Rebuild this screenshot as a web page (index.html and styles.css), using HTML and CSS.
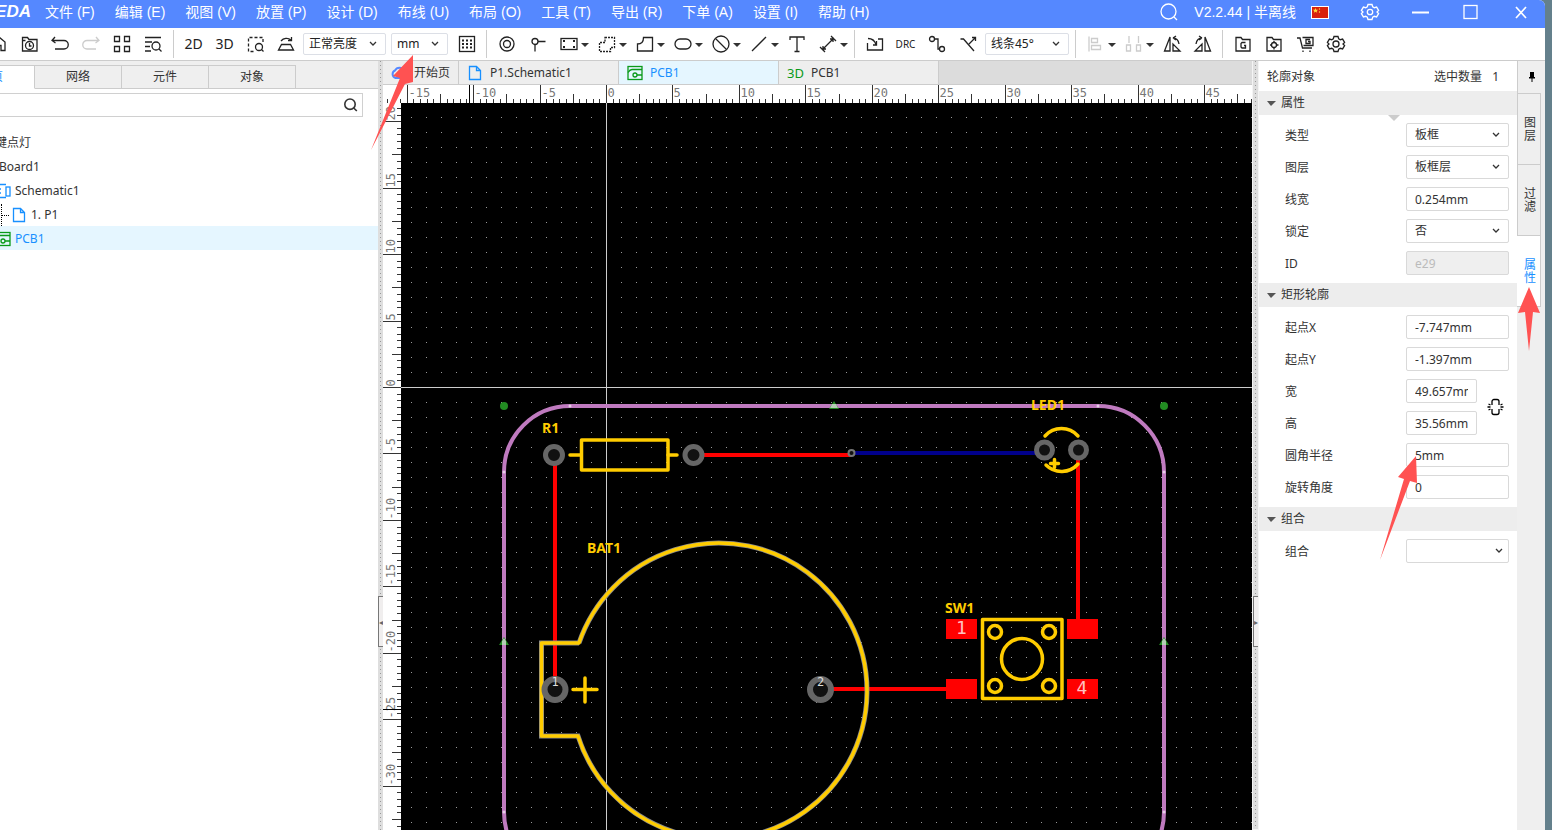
FILE: index.html
```
<!DOCTYPE html>
<html lang="zh-CN">
    <head>
        <meta charset="utf-8">
        <title>PCB1</title>
        <link rel="stylesheet" href="styles.css">
    </head>
    <body>
<div class="window">
    <header class="titlebar">
        <span class="logo">EDA</span>
        <nav class="menu">
            <button>文件 (F)</button>
            <button>编辑 (E)</button>
            <button>视图 (V)</button>
            <button>放置 (P)</button>
            <button>设计 (D)</button>
            <button>布线 (U)</button>
            <button>布局 (O)</button>
            <button>工具 (T)</button>
            <button>导出 (R)</button>
            <button>下单 (A)</button>
            <button>设置 (I)</button>
            <button>帮助 (H)</button>
        </nav>
        <div class="status">
            <button class="find" aria-label="搜索"><svg class="icon" viewBox="0 0 20 20"><circle cx="9.5" cy="9.5" r="7.5"/><path d="M15 15l3 3"/></svg></button>
            <span>V2.2.44 | 半离线</span>
            <svg class="flag" viewBox="0 0 18 13"><rect width="18" height="13" fill="#fff"/><rect x="1" y="1" width="16" height="11" fill="#d8200c"/><path d="M4.500 2l.8 1.700 1.800.1-1.400 1.200.5 1.800-1.700-1-1.700 1 .5-1.800-1.400-1.200 1.800-.1z" fill="#ffd83a"/><circle cx="8.500" cy="3" r=".7" fill="#ffd83a"/><circle cx="8.500" cy="6" r=".7" fill="#ffd83a"/></svg>
        </div>
        <div class="winbuttons">
            <button aria-label="设置"><svg class="icon" viewBox="0 0 20 20"><path d="M8 2.500h4l.7 2.300 1.600.9 2.300-.6 2 3.400-1.600 1.500 1.600 1.600-2 3.300-2.300-.6-1.600.9-.7 2.300H8l-.7-2.300-1.600-.9-2.300.6-2-3.300L3 10 1.400 8.500l2-3.400 2.300.6 1.600-.9z"/><circle cx="10" cy="10" r="2.700"/></svg></button>
            <button aria-label="最小化"><svg class="icon" viewBox="0 0 20 20"><path d="M2 10.500h17" stroke-width="2"/></svg></button>
            <button aria-label="最大化"><svg class="icon" viewBox="0 0 20 20"><rect x="4" y="3.500" width="13" height="13"/></svg></button>
            <button aria-label="关闭"><svg class="icon" viewBox="0 0 20 20"><path d="M6 5l10 11M16 5L6 16" stroke-width="1.700"/></svg></button>
        </div>
    </header>

    <div class="toolbar">
        <button class="tool first" aria-label="主页"><svg class="icon" viewBox="0 0 20 20"><path d="M1 10l9-7 6 5v8.500H12v-5H8v5H4V9"/></svg></button>
        <button class="tool" aria-label="最近"><svg class="icon" viewBox="0 0 20 20"><path d="M2.500 17V3.500h5l1.500 2H17V17zM2.500 6.500h3"/><circle cx="9.500" cy="11.500" r="4"/><path d="M9.500 9v3h2"/></svg></button>
        <button class="tool" aria-label="撤销"><svg class="icon" viewBox="0 0 20 20"><path d="M4 3L1 6.500l3.500 2.500M1.500 6.500H13a4 4 0 0 1 0 8.500H4"/></svg></button>
        <button class="tool off" aria-label="重做"><svg class="icon" viewBox="0 0 20 20"><path d="M14 3l3 3.500L13.500 9M16.500 6.500H5A4 4 0 0 0 5 15h9"/></svg></button>
        <button class="tool" aria-label="网格"><svg class="icon" viewBox="0 0 20 20"><path d="M1.500 2.500h5v5h-5zM11.500 2.500h5v5h-5zM1.500 12.500h5v5h-5zM11.500 12.500h5v5h-5z"/></svg></button>
        <button class="tool" aria-label="查找"><svg class="icon" viewBox="0 0 20 20"><path d="M1 3.500h16M1 8h7M1 12.500h5M1 17h6"/><circle cx="12" cy="12" r="4"/><path d="M15 15l2.500 2.500"/></svg></button>
        <i class="sep"></i>
        <button class="tool">2D</button>
        <button class="tool">3D</button>
        <button class="tool" aria-label="框选缩放"><svg class="icon" viewBox="0 0 20 20"><path d="M17 8V3.500H2.500v14H8" stroke-dasharray="3 2"/><circle cx="13" cy="13" r="3.500"/><path d="M15.500 15.500l2 2"/></svg></button>
        <button class="tool" aria-label="翻转板子"><svg class="icon" viewBox="0 0 20 20"><path d="M4.500 10.500h9l3 5.500h-15zM4 7c2.500-3 7-3.500 10-1M14.500 3v3.500H11"/></svg></button>
        <select class="brightness" aria-label="亮度"><option>正常亮度</option></select>
        <select class="unit" aria-label="单位"><option>mm</option></select>
        <button class="tool" aria-label="栅格"><svg class="icon" viewBox="0 0 20 20"><rect x="2.500" y="2.500" width="15" height="15"/><path d="M5 6.500h11M5 10h11M5 13.500h11" stroke-width="2" stroke-dasharray="2 2"/></svg></button>
        <i class="sep"></i>
        <button class="tool" aria-label="焊盘"><svg class="icon" viewBox="0 0 20 20"><circle cx="10" cy="10" r="7"/><circle cx="10" cy="10" r="3.500"/></svg></button>
        <button class="tool" aria-label="过孔"><svg class="icon" viewBox="0 0 20 20"><circle cx="7" cy="7.500" r="3"/><path d="M10 7.500h7.500M7 10.500v7"/></svg></button>
        <button class="tool drop" aria-label="板框"><svg class="icon" viewBox="0 0 20 20"><rect x="2" y="4.500" width="16" height="11"/><path d="M4 7h2M14 7h2M4 13h2M14 13h2" stroke-width="2"/></svg></button>
        <button class="tool drop" aria-label="禁止区域"><svg class="icon" viewBox="0 0 20 20"><path d="M8 3.500h9.500v10h-4v4h-11v-9H8z" stroke-dasharray="2 1"/></svg></button>
        <button class="tool drop" aria-label="铺铜"><svg class="icon" viewBox="0 0 20 20"><path d="M8.500 3.500h9v13.500h-15V10q6 0 6-6.500z"/></svg></button>
        <button class="tool drop" aria-label="槽"><svg class="icon" viewBox="0 0 20 20"><rect x="2" y="5" width="16" height="10" rx="5"/></svg></button>
        <button class="tool drop" aria-label="禁布"><svg class="icon" viewBox="0 0 20 20"><circle cx="10" cy="10" r="8"/><path d="M4.500 4.500l11 11"/></svg></button>
        <button class="tool drop" aria-label="线条"><svg class="icon" viewBox="0 0 20 20"><path d="M3 17L17 3"/></svg></button>
        <button class="tool" aria-label="文本"><svg class="icon" viewBox="0 0 20 20"><path d="M3 6V3h14v3M10 3v14.500M7.500 17.500h5"/></svg></button>
        <button class="tool drop" aria-label="尺寸"><svg class="icon" viewBox="0 0 20 20"><path d="M4 16L16 4M2 13l5 5M13 2l5 5M5 12v3h3M12 5h3v3"/></svg></button>
        <i class="sep"></i>
        <button class="tool" aria-label="导入变更"><svg class="icon" viewBox="0 0 20 20"><path d="M2.500 9v7h15V5H13M3 4.500q6 0 8 6M11.500 7v4H8"/></svg></button>
        <button class="tool drc">DRC</button>
        <button class="tool" aria-label="单路布线"><svg class="icon" viewBox="0 0 20 20"><circle cx="5" cy="5" r="2.500"/><circle cx="15" cy="15" r="2.500"/><path d="M7.500 5H11v10h1.500"/></svg></button>
        <button class="tool" aria-label="优化布线"><svg class="icon" viewBox="0 0 20 20"><path d="M2.500 5h3L16 17M11 10l6-6M14 3.500h3.500V7"/></svg></button>
        <select class="corner" aria-label="布线拐角"><option>线条45°</option></select>
        <i class="sep"></i>
        <button class="tool drop off" aria-label="对齐"><svg class="icon" viewBox="0 0 20 20"><path d="M3 2.500v15M5.500 4.500h6v4h-6zM5.500 11.500h9v4h-9z"/></svg></button>
        <button class="tool drop off" aria-label="分布"><svg class="icon" viewBox="0 0 20 20"><path d="M5 2v7M14.500 2v7M2.500 11h4v6h-4zM12.500 11h4v6h-4z"/></svg></button>
        <button class="tool" aria-label="左转"><svg class="icon" viewBox="0 0 20 20"><path d="M8 3v14H2.500zM11 17h7l-7-7zM11 4q5 0 6 6M11 4l3-2M11 4l3 2"/></svg></button>
        <button class="tool" aria-label="右转"><svg class="icon" viewBox="0 0 20 20"><path d="M12 3v14h5.500zM9 17H2l7-7zM9 4q-5 0-6 6M9 4L6 2M9 4L6 6"/></svg></button>
        <i class="sep"></i>
        <button class="tool" aria-label="导出Gerber"><svg class="icon" viewBox="0 0 20 20"><path d="M3 17V3.500h5l1.500 2H17V17zM12.500 8.500H9L8 9.500V13l1 1h3.500v-2.500H11"/></svg></button>
        <button class="tool" aria-label="导出坐标"><svg class="icon" viewBox="0 0 20 20"><path d="M3 17V3.500h5l1.500 2H17V17z"/><circle cx="10" cy="11" r="2.500"/><path d="M10 7v2M10 13v2.500M6 11h2M12 11h2.500"/></svg></button>
        <button class="tool" aria-label="下单"><svg class="icon" viewBox="0 0 20 20"><path d="M2 4h3l2.500 10H17M7.500 3.500H18v8H8.500M15 5.500h-4v4h4v-2h-2M8 16.500v1.500M15 16.500v1.500"/></svg></button>
        <button class="tool" aria-label="设置"><svg class="icon" viewBox="0 0 20 20"><path d="M8 2.500h4l.7 2.300 1.600.9 2.300-.6 2 3.400-1.600 1.500 1.600 1.600-2 3.300-2.300-.6-1.600.9-.7 2.300H8l-.7-2.300-1.600-.9-2.300.6-2-3.300L3 10 1.400 8.500l2-3.400 2.300.6 1.600-.9z"/><circle cx="10" cy="10" r="3"/></svg></button>
    </div>

    <div class="main">
        <aside class="project">
            <div class="ptabs">
                <button class="active">图页</button>
                <button>网络</button>
                <button>元件</button>
                <button>对象</button>
            </div>
            <div class="search">
                <input type="text" aria-label="过滤">
                <svg class="icon" viewBox="0 0 20 20"><circle cx="10" cy="9" r="6.500"/><path d="M15 14l3.500 3.500"/></svg>
            </div>
            <ul class="tree">
                <li class="l1">一键点灯</li>
                <li class="l2">Board1</li>
                <li class="l3"><svg class="icon blue" viewBox="0 0 16 16"><path d="M11 1.500H2v13h9M2 6h4M2 10h4"/><rect x="11" y="4" width="4" height="9"/></svg>Schematic1</li>
                <li class="l4"><i class="branch"></i><svg class="icon blue" viewBox="0 0 16 16"><path d="M2.500 1.500h7l4 4v9h-11zM9.500 1.500v4h4"/></svg>1. P1</li>
                <li class="l3 active"><svg class="icon green" viewBox="0 0 16 16"><rect x="1" y="1.500" width="14" height="13"/><path d="M1 6.500q2-2 4-2h10M10 10h5"/><circle cx="8" cy="10" r="2"/></svg>PCB1</li>
            </ul>
        </aside>
        <div class="splitter"><button class="handle" aria-label="收起左侧">◂</button></div>

        <section class="editor">
            <div class="tabs">
                <button class="start"><svg class="icon cloud" viewBox="0 0 16 16"><path d="M6 13H4.500a4 4 0 0 1-.5-7.500 5 5 0 0 1 9 0A4 4 0 0 1 12 13z"/></svg>开始页</button>
                <button><svg class="icon blue" viewBox="0 0 16 16"><path d="M2.500 1.500h7l4 4v9h-11zM9.500 1.500v4h4"/></svg>P1.Schematic1</button>
                <button class="active"><svg class="icon green" viewBox="0 0 16 16"><rect x="1" y="1.500" width="14" height="13"/><path d="M1 7.500q2-3 4-3h10M10 10h5"/><circle cx="8" cy="10" r="2"/></svg>PCB1</button>
                <button><span class="threed">3D</span>PCB1</button>
            </div>
            <svg class="ruler hruler" id="hruler"></svg>
            <div class="view">
                <svg class="ruler vruler" id="vruler"></svg>
                <svg class="board">
                    <defs>
                        <pattern id="dots" x="10" y="14" width="15" height="15" patternUnits="userSpaceOnUse">
                            <rect width="1" height="1" fill="#999"/>
                        </pattern>
                    </defs>
                    <rect width="100%" height="100%" fill="#000"/>
                    <rect width="100%" height="100%" fill="url(#dots)"/>
                    <path class="axis" d="M0 284.500H3000M205.500 0V3000"/>
                    <g transform="translate(-401 -103)">
                        <!-- outline -->
                        <rect class="outline" x="504" y="406" width="660" height="472" rx="66"/>
                        <g fill="#e6cfe6">
                            <circle cx="570" cy="406" r="1.500"/><circle cx="1098" cy="406" r="1.500"/>
                            <circle cx="504" cy="472" r="1.500"/><circle cx="1164" cy="472" r="1.500"/>
                            <circle cx="504" cy="812" r="1.500"/><circle cx="1164" cy="812" r="1.500"/>
                        </g>
                        <g fill="#228b22">
                            <circle cx="504" cy="406" r="4"/>
                            <circle cx="1164" cy="406" r="4"/>
                            <path d="M834 401l5 8h-10zM504 637l5 8h-10zM1164 637l5 8h-10z"/>
                        </g>
                        <path d="M832 404h4l2 4h-8zM502 641l2-3 2 3v4h-4zM1162 641l2-3 2 3v4h-4z" fill="#b4ccb4"/>
                        <!-- tracks -->
                        <path class="track" d="M555 455V689M693 455H851M1078 450V625M820 689H960"/>
                        <path class="track bottom" d="M852 453H1044"/>
                        <!-- silk -->
                        <path class="edge" d="M579 643H541.500V736H578A148 148 0 1 0 579 643"/>
                        <g class="silk">
                            <path d="M579 643H541.500V736H578A148 148 0 1 0 579 643M573 689.500h24M585 678v24"/>
                            <rect x="581.500" y="440" width="86.500" height="30"/>
                            <path d="M570 455h11M668 455h9"/>
                            <path d="M1045 436a22 22 0 0 1 33 0M1046 465a22 22 0 0 0 32-1M1050.500 463.500h8M1054.500 459.500v8"/>
                            <rect x="982.500" y="619.500" width="79.500" height="79"/>
                            <circle cx="1022" cy="659" r="20.500"/>
                            <circle cx="995" cy="632" r="6.500"/><circle cx="1049" cy="632" r="6.500"/>
                            <circle cx="995" cy="686" r="6.500"/><circle cx="1049" cy="686" r="6.500"/>
                        </g>
                        <g class="pad">
                            <circle cx="554" cy="455" r="8.500"/><circle cx="693.500" cy="455" r="8.500"/>
                            <circle cx="1044.500" cy="450" r="8"/><circle cx="1078.500" cy="450" r="8"/>
                        </g>
                        <g class="pad big">
                            <circle cx="555" cy="689.500" r="10.500"/><circle cx="820.500" cy="689.500" r="10.500"/>
                        </g>
                        <circle class="via" cx="851.500" cy="453" r="3"/>
                        <path d="M946 619h31v20h-31zM1067 619h31v20h-31zM946 679h31v20h-31zM1067 679h31v20h-31z" fill="#f00"/>
                        <g class="name">
                            <text x="542" y="433">R1</text>
                            <text x="587" y="553">BAT1</text>
                            <text x="1031" y="410">LED1</text>
                            <text x="945" y="613">SW1</text>
                        </g>
                        <g class="num">
                            <text x="555" y="686">1</text>
                            <text x="820.500" y="686">2</text>
                            <text class="smd" x="961.500" y="634">1</text>
                            <text class="smd" x="1082" y="694">4</text>
                        </g>
                    </g>
                </svg>
            </div>
        </section>
        <div class="splitter right"><button class="handle" aria-label="收起右侧">▸</button></div>

        <aside class="props">
            <div class="phead"><span>轮廓对象</span><span class="count">选中数量<b>1</b></span></div>
            <h3 class="marked">属性</h3>
            <div class="rows">
                <div class="row"><label for="type">类型</label><select id="type"><option>板框</option></select></div>
                <div class="row"><label for="layer">图层</label><select id="layer"><option>板框层</option></select></div>
                <div class="row"><label for="linew">线宽</label><input id="linew" type="text" value="0.254mm"></div>
                <div class="row"><label for="lock">锁定</label><select id="lock"><option>否</option></select></div>
                <div class="row"><label for="oid">ID</label><input id="oid" type="text" value="e29" disabled></div>
            </div>
            <h3>矩形轮廓</h3>
            <div class="rows">
                <div class="row"><label for="sx">起点X</label><input id="sx" type="text" value="-7.747mm"></div>
                <div class="row"><label for="sy">起点Y</label><input id="sy" type="text" value="-1.397mm"></div>
                <div class="size">
                    <div class="pair">
                        <div class="row"><label for="w">宽</label><input id="w" type="text" value="49.657mm"></div>
                        <div class="row"><label for="h">高</label><input id="h" type="text" value="35.56mm"></div>
                    </div>
                    <button class="chain" aria-label="锁定比例"><svg class="icon" viewBox="0 0 18 18"><path d="M5.500 7V3.500a2 2 0 0 1 2-2h3a2 2 0 0 1 2 2V7M5.500 11v3.500a2 2 0 0 0 2 2h3a2 2 0 0 0 2-2V11M1 9h3M14 9h3M2 6l2 1M2 12l2-1M16 6l-2 1M16 12l-2-1"/></svg></button>
                </div>
                <div class="row"><label for="rad">圆角半径</label><input id="rad" type="text" value="5mm"></div>
                <div class="row"><label for="rot">旋转角度</label><input id="rot" type="text" value="0"></div>
            </div>
            <h3>组合</h3>
            <div class="rows">
                <div class="row"><label for="grp">组合</label><select id="grp" class="empty"><option></option></select></div>
            </div>
        </aside>
        <div class="side">
            <button class="pin" aria-label="固定"><svg viewBox="0 0 10 12"><path d="M3 1h4v5h1v1.500H5.500V11h-1V7.500H2V6h1z"/></svg></button>
            <button>图层</button>
            <button>过滤</button>
            <button class="active">属性</button>
        </div>
    </div>
</div>

<svg class="marks">
    <path d="M413 55L393 76L400 78L371 150L405 84L413 82z"/>
    <path d="M1416 456L1398 477L1404 479L1380 560L1410 481L1417 483z"/>
    <path d="M1529 287L1518 313L1525 312L1529 351L1533 312L1540 313z"/>
</svg>

<script>
    var step = 66.45 / 10,
        hruler = document.getElementById('hruler'),
        vruler = document.getElementById('vruler');

    function tickSize(i) {
        return i % 10 == 0 ? 18 : (i % 5 == 0 ? 9 : 4);
    }
    function draw() {
        var h = '', v = '', i, p, s,
            width = hruler.getBoundingClientRect().width,
            height = vruler.getBoundingClientRect().height;
        // origin of the board is 223px right of the ruler's left edge
        for (i = -33; 223 + i * step < width; i++) {
            p = Math.round(223 + i * step) + 0.5;
            s = tickSize(i);
            h += '<path d="M' + p + ' 18V' + (18 - s) + '"/>';
            if (i % 10 == 0) {
                h += '<text x="' + (p + 1) + '" y="12">' + i / 2 + '</text>';
            }
        }
        // and 284px below its top edge
        for (i = 42; 284 - i * step < height; i--) {
            p = Math.round(284 - i * step) + 0.5;
            s = tickSize(i);
            v += '<path d="M18 ' + p + 'H' + (18 - s) + '"/>';
            if (i % 10 == 0) {
                v += '<text transform="translate(12 ' + (p - 1) + ') rotate(-90)">' + i / 2 + '</text>';
            }
        }
        // cursor position
        h += '<path class="cursor" d="M86.5 0V18"/>';
        v += '<path class="cursor" d="M0 606.5H18"/>';
        hruler.innerHTML = h;
        vruler.innerHTML = v;
    }
    draw();
    window.onresize = draw;
</script>
    </body>
</html>
```
FILE: styles.css
```
* {
    box-sizing: border-box;
}
body {
    margin: 0;
    height: 100vh;
    overflow: hidden;
    background: #64808c;
    color: #333;
    font: 12px/16px "Noto Sans", "Noto Sans CJK SC", sans-serif;
}
button, input, select {
    font: inherit;
    color: inherit;
    margin: 0;
    padding: 0;
    border: 0;
    background: none;
}
.icon {
    width: 20px;
    height: 20px;
    flex: none;
    fill: none;
    stroke: currentColor;
    stroke-width: 1.3;
}
.window {
    display: flex;
    flex-direction: column;
    height: 100vh;
    margin-right: 7px;
    background: #fff;
    border-top-right-radius: 6px;
    overflow: hidden;
}

/* title bar */
.titlebar {
    display: flex;
    align-items: center;
    height: 28px;
    padding-bottom: 4px;
    background: #5588ff;
    color: #fff;
    font: 14px/20px "Liberation Sans", "Noto Sans CJK SC", sans-serif;
    white-space: nowrap;
}
.logo {
    width: 35px;
    display: flex;
    justify-content: flex-end;
    padding-right: 4px;
    font-size: 17px;
    font-weight: bold;
    font-style: italic;
}
.menu {
    display: flex;
    flex: 1;
}
.menu button {
    padding: 0 10px;
}
.status {
    display: flex;
    align-items: center;
    gap: 15px;
}
.find {
    display: flex;
}
.flag {
    width: 18px;
    height: 13px;
}
.winbuttons {
    display: flex;
    padding-left: 16px;
}
.winbuttons button {
    display: flex;
    justify-content: center;
    width: 50px;
}

/* toolbar */
.toolbar {
    display: flex;
    align-items: center;
    height: 33px;
    border-bottom: 1px solid #ccc;
    color: #222;
}
.tool {
    display: flex;
    align-items: center;
    justify-content: center;
    width: 31px;
    height: 28px;
    flex: none;
    font-size: 14px;
}
.tool.first {
    margin-left: -17px;
}
.tool.off {
    color: #ccc;
}
.tool.drc {
    font-size: 10px;
}
.drop {
    width: 38px;
    padding-left: 3px;
}
.drop::after {
    content: "";
    border: 4px solid transparent;
    border-top-color: #333;
    border-bottom: 0;
    margin: 2px 0 0 2px;
}
.sep {
    flex: none;
    width: 1px;
    height: 28px;
    margin: 0 4px;
    background: #ccc;
}
select {
    appearance: none;
    height: 24px;
    border: 1px solid #d9d9d9;
    border-radius: 2px;
    padding: 0 8px;
    background: #fff url("data:image/svg+xml,%3Csvg xmlns='http://www.w3.org/2000/svg' width='8' height='6'%3E%3Cpath d='M1 1l3 3 3-3' fill='none' stroke='%23333' stroke-width='1.3'/%3E%3C/svg%3E") no-repeat right 8px center;
}
.toolbar select {
    flex: none;
    height: 22px;
    padding: 0 5px;
    border-color: #dcdfe6;
}
.brightness {
    width: 83px;
    margin: 0 5px 0 1px;
}
.unit {
    width: 57px;
    margin-right: 3px;
}
.corner {
    width: 84px;
    margin: 0 2px;
}

/* project panel, scrolled past its left edge */
.main {
    display: flex;
    flex: 1;
    min-height: 0;
}
.project {
    flex: none;
    width: 430px;
    margin-left: -52px;
}
.ptabs {
    display: flex;
    padding-top: 4px;
    background: linear-gradient(#ccc, #ccc) bottom / 100% 1px no-repeat #efefef;
}
.ptabs button {
    width: 87px;
    height: 24px;
    border: 1px solid #ccc;
    border-left: 0;
    background: #efefef;
}
.ptabs .active {
    background: #fff;
    border-bottom-color: #fff;
    color: #1890ff;
}
.search {
    display: flex;
    align-items: center;
    height: 24px;
    margin: 4px 15px 13px 0;
    padding-right: 4px;
    border: 1px solid #d0d0d0;
}
.search input {
    flex: 1;
}
.search .icon {
    width: 16px;
    height: 16px;
    stroke-width: 2;
}
.tree {
    margin: 0;
    padding: 0;
    list-style: none;
}
.tree li {
    display: flex;
    align-items: center;
    gap: 4px;
    height: 24px;
    padding-top: 2px;
}
.tree .icon, .tabs .icon {
    width: 16px;
    height: 16px;
}
.tree .l1 { padding-left: 35px; }
.tree .l2 { padding-left: 51px; }
.tree .l3 { padding-left: 47px; }
.tree .l4 { padding-left: 53px; }
.tree .active {
    background: #e5f6ff;
    color: #1890ff;
}
.branch {
    align-self: stretch;
    width: 8px;
    margin-right: -2px;
    border-left: 1px dotted #000;
    background: linear-gradient(90deg, #000 50%, transparent 50%) left center / 2px 1px repeat-x;
}
.icon.blue { color: #1890ff; }
.icon.green { color: #0a9a1a; }
.icon.cloud { color: #5588ff; stroke-width: 2; }

.splitter {
    flex: none;
    width: 5px;
    padding-top: 535px;
    background: linear-gradient(#999 25%, transparent 25%) center top / 1px 4px repeat-y #dedede;
}
.splitter.right {
    width: 7px;
    border: 1px solid #f4f4f4;
    border-top: 0;
}
.handle {
    display: flex;
    align-items: center;
    justify-content: center;
    width: 100%;
    height: 51px;
    border: 1px solid #777;
    border-right: 0;
    background: #f0eeee;
    color: #666;
    font-size: 8px;
}

/* editor */
.editor {
    flex: 1;
    display: flex;
    flex-direction: column;
    min-width: 0;
}
.tabs {
    display: flex;
    height: 24px;
    border-bottom: 1px solid #ccc;
    background: #dcdcdc;
}
.tabs button {
    display: flex;
    align-items: center;
    gap: 7px;
    width: 160px;
    padding-left: 8px;
    border-right: 1px solid #ccc;
    background: #eee;
}
.tabs .start {
    width: 76px;
}
.tabs .active {
    background: #e5f6ff;
    color: #1890ff;
}
.threed {
    color: #0a9a1a;
    font-size: 13px;
}
.ruler {
    display: block;
    flex: none;
    background: #fff;
    stroke: #333;
}
.ruler text {
    font: 12px "DejaVu Sans Mono", monospace;
    fill: #777;
    stroke: none;
}
.cursor {
    stroke: #000;
}
.hruler {
    width: 100%;
    height: 18px;
}
.view {
    display: flex;
    flex: 1;
    min-height: 0;
}
.vruler {
    width: 18px;
    height: 100%;
}
.board {
    display: block;
    flex: 1;
    min-width: 0;
    height: 100%;
}
.axis {
    stroke: #ccc;
}
.outline {
    fill: none;
    stroke: #bf7abf;
    stroke-width: 4;
}
.track {
    fill: none;
    stroke: #f00;
    stroke-width: 4;
}
.track.bottom {
    stroke: #00008b;
}
.silk {
    fill: none;
    stroke: #fc0;
    stroke-width: 3.5;
    stroke-linecap: round;
    stroke-linejoin: round;
}
.edge {
    fill: none;
    stroke: #8a8a8a;
    stroke-width: 5;
}
.pad {
    fill: #111;
    stroke: #666;
    stroke-width: 5;
}
.pad.big {
    stroke-width: 6;
}
.via {
    fill: #111;
    stroke: #777;
    stroke-width: 2;
}
.name {
    fill: #fc0;
    font: bold 14px "Noto Sans", sans-serif;
}
.num {
    fill: #ddd;
    font: 12px "DejaVu Sans Mono", monospace;
    text-anchor: middle;
}
.smd {
    fill: #ffc0c0;
    font-size: 18px;
}

/* properties */
.props {
    flex: none;
    width: 258px;
}
.phead {
    display: flex;
    justify-content: space-between;
    align-items: center;
    height: 30px;
    padding: 2px 18px 0 8px;
}
.count b {
    margin-left: 10px;
    font-weight: normal;
}
.props h3 {
    position: relative;
    display: flex;
    align-items: center;
    gap: 5px;
    height: 24px;
    margin: 0;
    padding-left: 8px;
    background: #ededed;
    font-size: 12px;
    font-weight: normal;
}
.props h3::before {
    content: "";
    border: 5px solid transparent;
    border-top-color: #555;
    border-bottom: 0;
    border-left-width: 4px;
}
.marked::after {
    content: "";
    position: absolute;
    top: 24px;
    left: 50%;
    border: 6px solid transparent;
    border-top-color: #ccc;
    border-bottom: 0;
}
.rows {
    padding: 4px 8px 4px 26px;
}
.row {
    display: flex;
    align-items: center;
    justify-content: space-between;
    height: 32px;
}
.row label {
    padding-top: 2px;
}
.row input, .row select {
    width: 103px;
    height: 24px;
    padding: 0 8px;
    border: 1px solid #d9d9d9;
    border-radius: 2px;
}
.row input:disabled {
    background: #efefef;
    color: #bbb;
}
.row .empty {
    background-position: right 5px center;
}
.size {
    display: flex;
    align-items: center;
}
.pair {
    flex: 1;
}
.pair .row input {
    width: 71px;
}
.chain {
    display: flex;
    margin: 0 4px 0 9px;
    color: #000;
}
.chain .icon {
    width: 19px;
    height: 18px;
}

/* side tabs */
.side {
    flex: none;
    width: 28px;
    padding-right: 4px;
    background: #efefef;
}
.side button {
    display: block;
    width: 24px;
    height: 71px;
    padding: 0 5px 0 6px;
    border: 1px solid #ccc;
    border-top: 0;
    line-height: 13px;
    word-break: break-all;
}
.side .pin {
    height: 33px;
    border-right: 0;
    padding: 0 4px 0 9px;
}
.pin svg {
    display: block;
    width: 10px;
    height: 12px;
}
.side .active {
    border-left: 0;
    padding-left: 7px;
    padding-right: 4px;
    background: #fff;
    color: #1890ff;
}

/* hint arrows, drawn over everything */
.marks {
    position: absolute;
    top: 0;
    left: 0;
    width: 100%;
    height: 100%;
    pointer-events: none;
    fill: #ff5252;
}
```
